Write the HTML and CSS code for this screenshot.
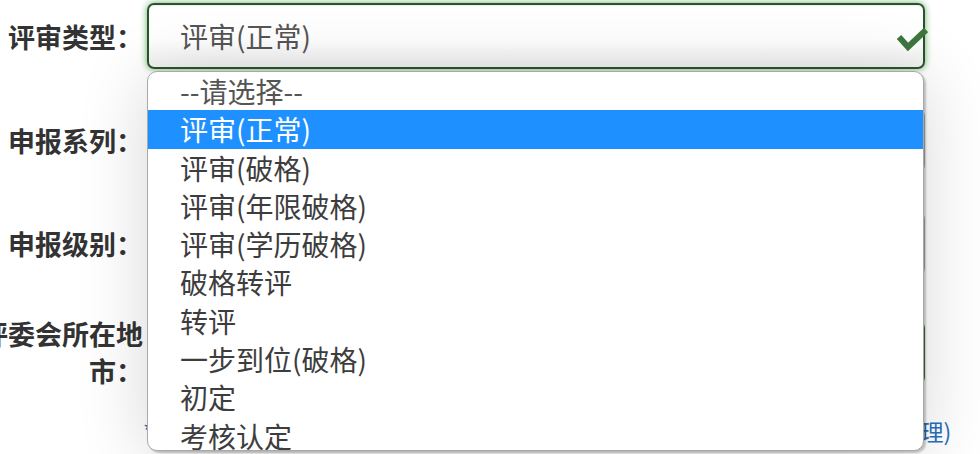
FILE: index.html
```html
<!DOCTYPE html>
<html lang="zh-CN">
<head>
  <meta charset="UTF-8" />
  <title>评审申报</title>
  <link rel="stylesheet" href="styles.css">
</head>
<body>
  <form class="apply-form">
    <div class="form-row">
      <label class="form-label">评审类型：</label>
      <div class="form-field">
        <div class="form-select is-success is-focus">评审(正常)</div>
        <svg class="feedback-icon" viewBox="0 0 32 28" width="32" height="28">
          <path d="M3 12 L12 22 L30 5" fill="none" stroke="#3c763d" stroke-width="6" />
        </svg>
      </div>
    </div>

    <div class="form-row">
      <label class="form-label">申报系列：</label>
      <div class="form-field">
        <div class="form-select">高等学校教师</div>
      </div>
    </div>

    <div class="form-row">
      <label class="form-label">申报级别：</label>
      <div class="form-field">
        <div class="form-select">副高级</div>
      </div>
    </div>

    <div class="form-row">
      <label class="form-label">评委会所在地市：</label>
      <div class="form-field">
        <div class="form-select is-success">省直</div>
      </div>
    </div>

    <p class="form-note">*请根据实际情况选择评审类型，如有疑问请咨询所在单位人事部门(按规定办理)</p>

    <!-- открытый список первого select -->
    <ul class="select-popup">
      <li class="option is-placeholder">--请选择--</li>
      <li class="option is-selected">评审(正常)</li>
      <li class="option">评审(破格)</li>
      <li class="option">评审(年限破格)</li>
      <li class="option">评审(学历破格)</li>
      <li class="option">破格转评</li>
      <li class="option">转评</li>
      <li class="option">一步到位(破格)</li>
      <li class="option">初定</li>
      <li class="option">考核认定</li>
      <li class="option">考核认定(破格)</li>
    </ul>
  </form>
</body>
</html>
```

FILE: styles.css
```css
* {
  margin: 0;
  padding: 0;
  box-sizing: border-box;
}
html,
body {
  height: 454px;
}
body {
  background: #fff;
  font-family: "Noto Sans CJK SC", "Noto Sans", sans-serif;
  color: #333;
}

/* форма чуть сдвинута влево, как в оригинале */
.apply-form {
  position: relative;
  height: 454px;
  margin-left: -32px;
  padding-top: 3px;
  display: flex;
  flex-direction: column;
  gap: 40px;
}

.form-row {
  display: flex;
  align-items: center;
  gap: 4px;
}
.form-label {
  width: 175px;
  flex: none;
  text-align: right;
  font-size: 27px;
  font-weight: bold;
  line-height: 37px;
  color: #333;
}
.form-field {
  position: relative;
  width: 778px;
}
.form-select {
  height: 63px;
  padding-left: 31px;
  border: 2px solid #b4b4b4;
  border-radius: 7px;
  background: linear-gradient(to bottom, #fff 55%, #f0f0f0);
  font-size: 28px;
  line-height: 59px;
  color: #555;
}
.form-select.is-success {
  border-color: #3c763d;
}
.form-select.is-focus {
  height: 66px;
  line-height: 62px;
  border-color: #2b542c;
  box-shadow: inset 0 1px 1px rgba(0, 0, 0, .075), 0 0 7px #67b168;
}
.feedback-icon {
  position: absolute;
  top: 22px;
  right: -3px;
}

.form-note {
  margin-top: -12px;
  padding-left: 175px;
  font-size: 23px;
  line-height: 28px;
  color: #2a6ebb;
  white-space: nowrap;
}

.select-popup {
  position: absolute;
  top: 71px;
  left: 179px;
  width: 777px;
  height: 380px;
  overflow: hidden;
  list-style: none;
  background: #fff;
  border: 1px solid #a9a9a9;
  border-radius: 10px;
  box-shadow: 2px 2px 2px rgba(0, 0, 0, .22), 0 6px 70px rgba(0, 0, 0, .16);
}
.option {
  height: 38.3px;
  padding-left: 32px;
  font-size: 28px;
  line-height: 38.3px;
  color: #3d3d3d;
  white-space: nowrap;
}
.option.is-placeholder {
  color: #555;
}
.option.is-selected {
  background: #1e90ff;
  color: #fff;
}
```
